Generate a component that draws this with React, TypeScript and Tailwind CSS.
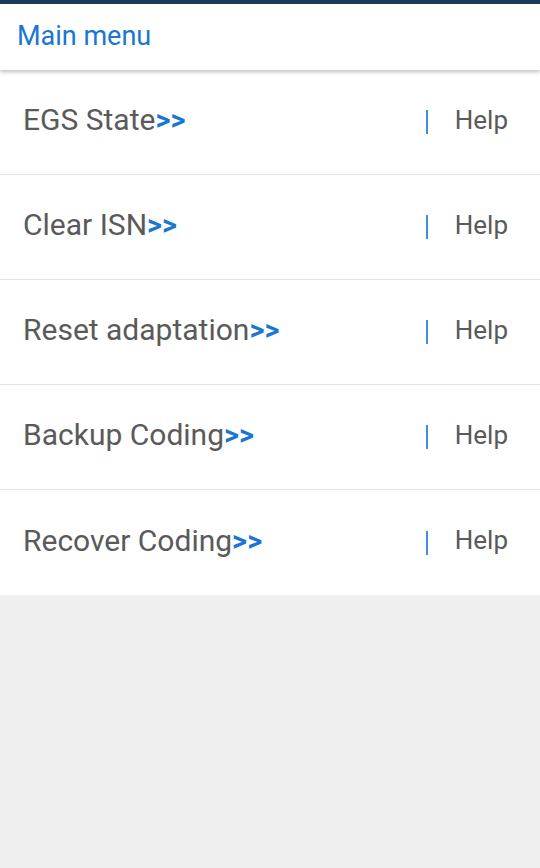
const items = ['EGS State', 'Clear ISN', 'Reset adaptation', 'Backup Coding', 'Recover Coding'];

export default function App() {
  return (
    <div className="min-h-[868px] bg-[#efefef] font-['Roboto',sans-serif]">
      <div className="h-[4px] bg-[#1f3a5c]" />
      {/* Header */}
      <header className="relative z-10 h-[66px] bg-white flex items-center px-[17px] pb-[2px] shadow-[0_2px_4px_rgba(0,0,0,0.25)]">
        <h1 className="text-[27px] text-[#1976d2] leading-none">Main menu</h1>
      </header>

      {/* Menu list */}
      <ul className="bg-white">
        {items.map((item, i) => (
          <li
            key={item}
            className={`h-[105px] flex items-center pl-[23px] pr-[32px] pb-[4px] ${i < items.length - 1 ? 'border-b border-[#e4e4e4]' : ''}`}
          >
            <span className="flex-1 text-[30px] text-[#5a5a5a]">
              {item}
              <span className="text-[#1976d2] font-semibold text-[29px]">&gt;&gt;</span>
            </span>
            <span className="w-[1.5px] h-[24px] bg-[#3f8fe0] mr-[27px] mt-[4px]" />
            <span className="text-[26px] text-[#5a5a5a]">Help</span>
          </li>
        ))}
      </ul>
    </div>
  );
}
